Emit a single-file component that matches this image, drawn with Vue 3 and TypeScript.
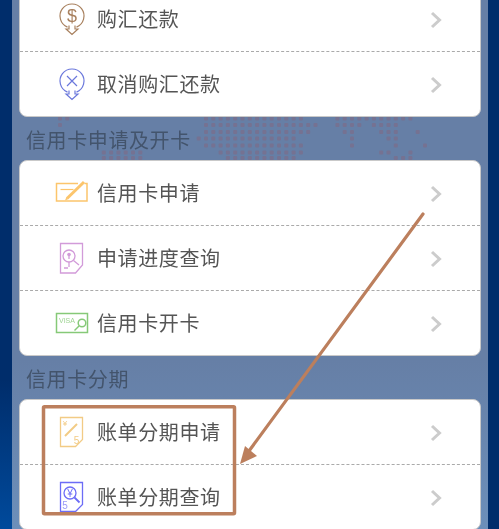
<script setup lang="ts">
type Row = { label: string; icon: string };
type Section = { title?: string; rows: Row[] };

const sections: Section[] = [
  {
    rows: [
      { label: "购汇还款", icon: "dollar" },
      { label: "取消购汇还款", icon: "cancel" },
    ],
  },
  {
    title: "信用卡申请及开卡",
    rows: [
      { label: "信用卡申请", icon: "apply" },
      { label: "申请进度查询", icon: "progress" },
      { label: "信用卡开卡", icon: "visa" },
    ],
  },
  {
    title: "信用卡分期",
    rows: [
      { label: "账单分期申请", icon: "stage" },
      { label: "账单分期查询", icon: "stageQuery" },
    ],
  },
];

// world map dots behind the first section title: [y, [from, to], ...]
const mapRows: [number, number[][]][] = [
  [118.5, [[58, 72], [205, 303], [332, 415]]],
  [125, [[60, 64], [82, 86], [105, 108], [200, 317], [335, 360], [372, 395]]],
  [132, [[68, 72], [200, 310], [342, 352], [378, 395], [415, 418]]],
  [138.5, [[198, 295], [345, 352], [385, 395]]],
  [145.5, [[205, 300], [350, 354], [393, 397], [423, 426]]],
  [152.5, [[100, 140], [215, 300], [380, 390], [405, 412]]],
  [158, [[100, 140], [225, 295], [390, 410]]],
];

const dots: { x: number; y: number }[] = [];
for (const [y, ranges] of mapRows) {
  for (let x = 58; x < 425; x += 7.3) {
    if (ranges.some(([a, b]) => x >= a - 2 && x <= b)) dots.push({ x, y });
  }
}
</script>

<template>
  <div class="page">
    <div class="edge edge-left"></div>
    <main class="main">
      <svg class="map" width="476" height="529" viewBox="12 0 476 529">
        <rect
          v-for="(d, i) in dots"
          :key="i"
          :x="d.x"
          :y="d.y - 2"
          width="4"
          height="4"
          rx="1"
          fill="#7b6d8b"
          opacity="0.75"
        />
      </svg>
      <section v-for="(section, i) in sections" :key="i" class="section">
        <h2 v-if="section.title" class="title">{{ section.title }}</h2>
        <ul class="card" :class="{ 'card-first': i === 0 }">
          <li v-for="row in section.rows" :key="row.label" class="row">
            <svg class="icon" viewBox="0 0 40 36" fill="none">
              <g v-if="row.icon === 'dollar'" stroke="#a8805e" stroke-width="1.2">
                <path d="M15.500 26.100A12 12 0 1 1 24.500 26.100" />
                <path d="M17 24.500V28h-3l6 5.500 6-5.500h-3v-3.500" />
                <text x="20" y="21" class="glyph" font-size="18" fill="#a8805e" stroke="none">$</text>
              </g>
              <g v-else-if="row.icon === 'cancel'" stroke="#6b78dc" stroke-width="1.2">
                <path d="M15.500 26.100A12 12 0 1 1 24.500 26.100" />
                <path d="M17 24.500V28h-3l6 5.500 6-5.500h-3v-3.500" />
                <path d="M15 10l10 10M25 10l-10 10" />
              </g>
              <g v-else-if="row.icon === 'apply'" stroke="#fcc56c" stroke-width="1.5">
                <path d="M32.500 8.500h2.500v17.500H4.500V8.500H26" />
                <path d="M8.500 14.500h13" stroke-width="1.200" />
                <path d="M15 23.500L32 7" stroke-width="3" />
                <path d="M13 25.500l3-1.200-1.800-1.800z" fill="#fcc56c" stroke="none" />
              </g>
              <g v-else-if="row.icon === 'progress'" stroke="#d29bd9" stroke-width="1.300">
                <path d="M8.500 3.500h22v21.500l-7 8h-15z" />
                <circle cx="17" cy="16" r="6" />
                <path d="M21.500 20.500l5.500 4.500M12 28h4M17 22v5" />
                <circle cx="17" cy="14.500" r="1.800" fill="#d29bd9" stroke="none" />
                <path d="M17 15v4" />
              </g>
              <g v-else-if="row.icon === 'visa'" stroke="#86c978" stroke-width="1.500">
                <path d="M4.500 8.500h31v19h-31z" />
                <text x="7" y="18" class="glyph glyph-visa" font-size="7" fill="#9ed492" stroke="none">VISA</text>
                <circle cx="30" cy="18" r="3.800" fill="#fff" />
                <path d="M27 21l-4.500 4.500" />
              </g>
              <g v-else-if="row.icon === 'stage'" stroke="#f2cb85" stroke-width="1.300">
                <path d="M8.500 3.500h22v22l-7 7h-15z" />
                <path d="M13 22l12-12" stroke-width="2" />
                <text x="13" y="11.500" class="glyph" font-size="8" fill="#f2cb85" stroke="none">¥</text>
                <text x="24.500" y="30" class="glyph" font-size="10" fill="#f2cb85" stroke="none">5</text>
              </g>
              <g v-else stroke="#6c6cf6" stroke-width="1.300">
                <path d="M8.500 3.500h22v22l-7 7h-15z" />
                <circle cx="18" cy="14" r="6" />
                <path d="M22.500 18.500l5 5" stroke-width="1.800" />
                <text x="18" y="17.500" class="glyph" font-size="10" fill="#6c6cf6" stroke="none">¥</text>
                <text x="13" y="30" class="glyph" font-size="10" fill="#9b9bf8" stroke="none">5</text>
              </g>
            </svg>
            <span class="label">{{ row.label }}</span>
            <svg class="chevron" width="12" height="18" viewBox="0 0 12 18" fill="none">
              <path d="M2 2l7.500 7L2 16" stroke="#cccccc" stroke-width="3" />
            </svg>
          </li>
        </ul>
      </section>
    </main>
    <div class="edge edge-right"></div>

    <svg class="marks" width="499" height="529" viewBox="0 0 499 529" fill="none">
      <rect x="43.500" y="406.800" width="191" height="107" rx="1" stroke="#bc7f5d" stroke-width="3.500" />
      <path d="M423 214L249 451" stroke="#bc7f5d" stroke-width="3.200" stroke-linecap="round" />
      <path d="M240 464l5-18 12 10z" fill="#bc7f5d" />
    </svg>
  </div>
</template>

<style>
html,
body {
  margin: 0;
  background: #002d6b;
}
</style>

<style scoped>
.page {
  position: relative;
  display: flex;
  width: 499px;
  height: 529px;
  overflow: hidden;
  font-family: "Noto Sans CJK SC", "Noto Sans", sans-serif;
  filter: blur(0.35px);
}
.edge {
  flex-shrink: 0;
}
.edge-left {
  width: 12px;
  background: linear-gradient(180deg, #002d6b 0, #002d6b 380px, #004a9c 529px);
}
.edge-right {
  width: 11px;
  background: #002d6b;
}
.main {
  position: relative;
  flex: 1;
  padding: 0 7px;
  background: linear-gradient(180deg, #667fa6 0, #667fa6 360px, #6c8fba 529px);
}
.map {
  position: absolute;
  top: 0;
  left: 0;
  pointer-events: none;
}
.section {
  position: relative;
}
.title {
  display: flex;
  align-items: center;
  height: 43px;
  margin: 0;
  padding: 1px 0 0 7px;
  box-sizing: border-box;
  color: #43546c;
  font-size: 20px;
  font-weight: 400;
  letter-spacing: 0.6px;
}
.card {
  margin: 0;
  padding: 0;
  list-style: none;
  background: #fff;
  border: 1px solid #c9c9c9;
  border-radius: 8px;
}
.card-first {
  margin-top: -14px;
}
.row {
  display: flex;
  align-items: center;
  height: 64px;
  border-bottom: 1px dashed #aaaaaa;
}
.row:last-child {
  border-bottom: none;
}
.icon {
  flex-shrink: 0;
  width: 40px;
  height: 36px;
  margin-left: 32px;
}
.glyph {
  font-family: "Liberation Sans", sans-serif;
  text-anchor: middle;
}
.glyph-visa {
  text-anchor: start;
}
.label {
  margin-left: 5px;
  padding-bottom: 2px;
  color: #555555;
  font-size: 20px;
  letter-spacing: 0.6px;
}
.chevron {
  margin-left: auto;
  margin-right: 38px;
  margin-top: 2px;
}
.marks {
  position: absolute;
  top: 0;
  left: 0;
  pointer-events: none;
}
</style>
